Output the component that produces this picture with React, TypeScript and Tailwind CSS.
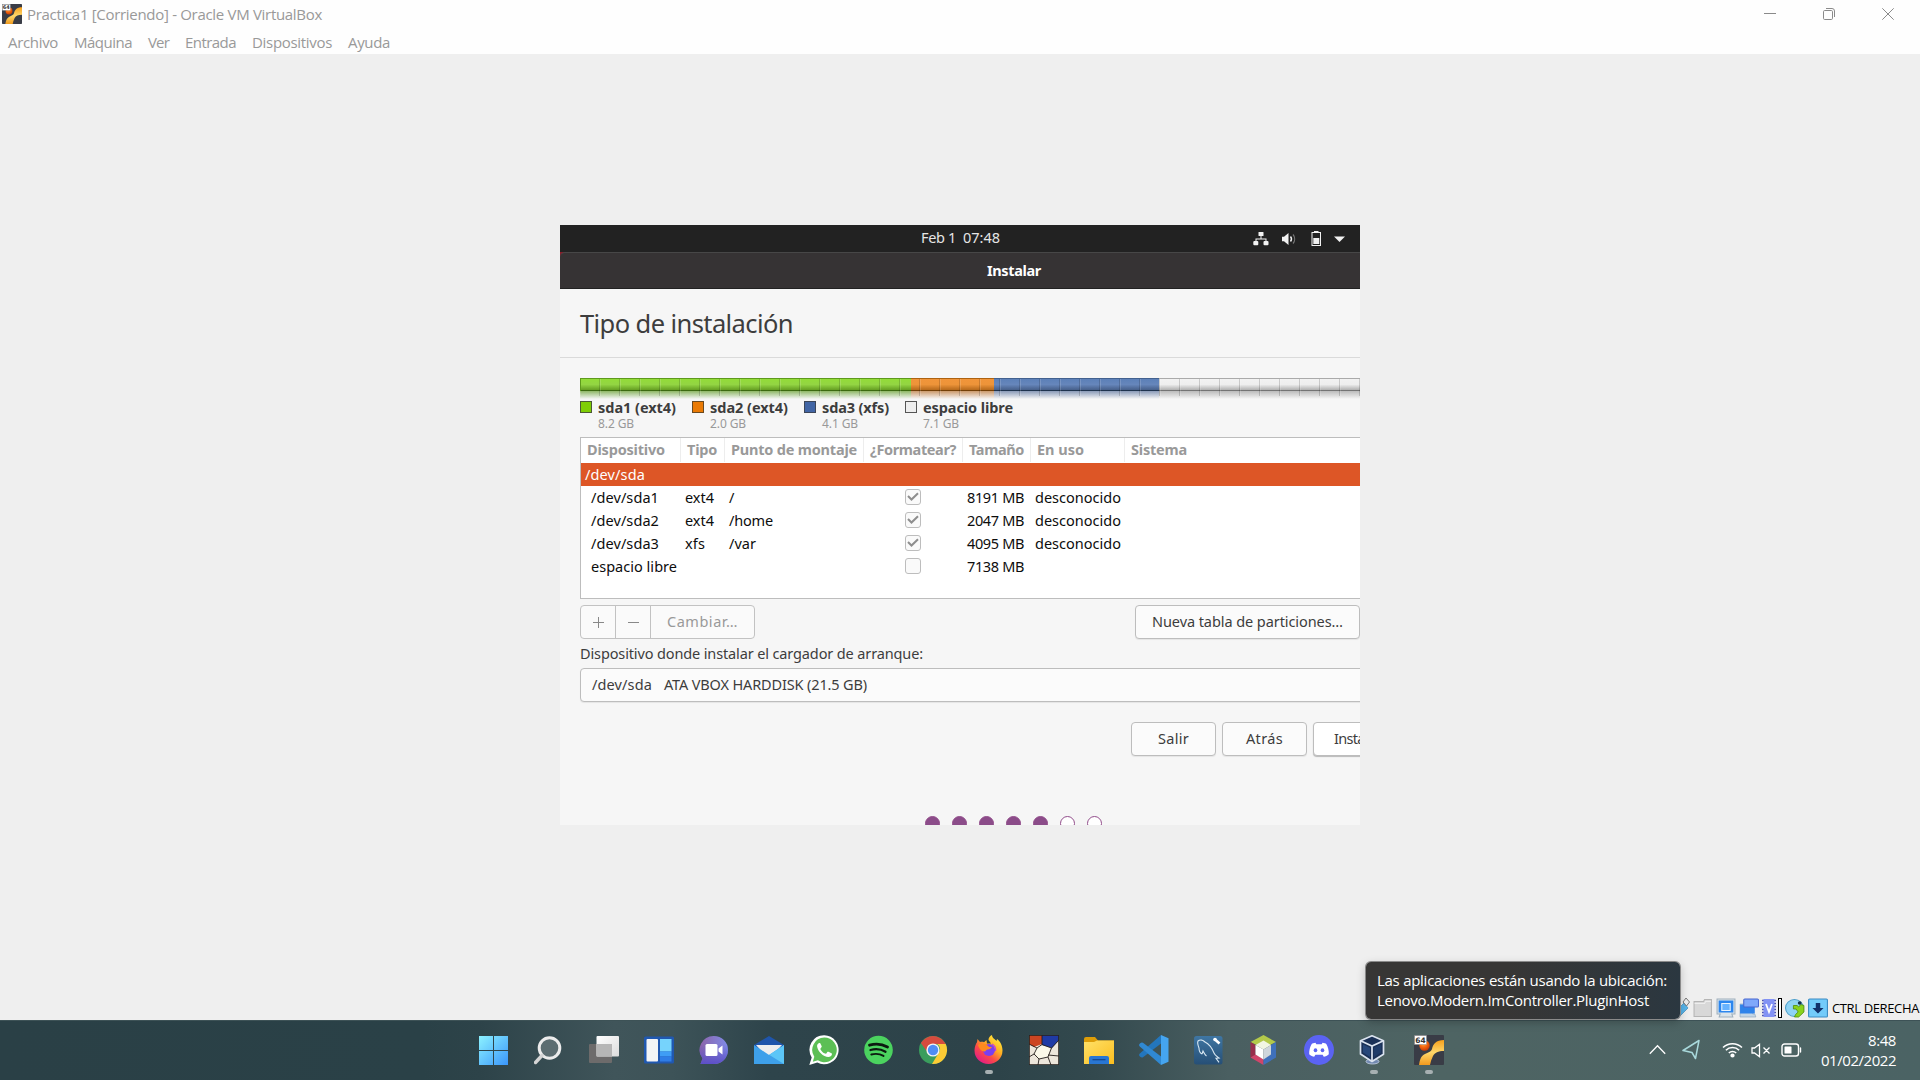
import React, { useLayoutEffect, useRef, type ReactNode } from "react";

/** Single line of text whose tracking is adjusted so it spans `w` pixels. */
function Fit({ w, className = "", children }: { w: number; className?: string; children: string }) {
  const ref = useRef<HTMLSpanElement>(null);
  useLayoutEffect(() => {
    const el = ref.current;
    if (!el) return;
    el.style.letterSpacing = "0px";
    const natural = el.getBoundingClientRect().width;
    el.style.letterSpacing = `${(w - natural) / Math.max(1, children.length)}px`;
  }, [w, children]);
  return (
    <span ref={ref} className={`inline-block shrink-0 whitespace-pre ${className}`}>
      {children}
    </span>
  );
}

function VmLogo({ size }: { size: number }) {
  return (
    <svg width={size} height={size} viewBox="0 0 30 30" className="shrink-0">
      <defs>
        <linearGradient id="vmY" x1="0" y1="0" x2="0" y2="1">
          <stop offset="0" stopColor="#f6a01c" />
          <stop offset=".5" stopColor="#ffd76a" />
          <stop offset="1" stopColor="#f09a1e" />
        </linearGradient>
        <radialGradient id="vmR" cx=".4" cy=".3" r=".7">
          <stop offset="0" stopColor="#ffae4a" />
          <stop offset=".5" stopColor="#f76a10" />
          <stop offset="1" stopColor="#c63c05" />
        </radialGradient>
      </defs>
      <rect width="30" height="30" rx="1" fill="#393c46" />
      <circle cx="10.5" cy="10.5" r="5.2" fill="url(#vmR)" />
      <path d="M30 5v11c-6 0-9 1.500-11 5-1.500 3-2.500 6-3 9H5c1-6 2-9 6-11 3-1.600 6-2 7-5 1-5 4-9 12-9z" fill="url(#vmY)" />
      <rect x=".5" y=".5" width="12" height="9" fill="#fff" stroke="#888" strokeWidth=".5" />
      <text x="6.500" y="7.800" textAnchor="middle" fontSize="7.500" fontWeight="700" fontFamily="DejaVu Sans" fill="#333">64</text>
    </svg>
  );
}

const menus: [string, number, number][] = [
  ["Archivo", 50, 16],
  ["Máquina", 58, 16],
  ["Ver", 21, 16],
  ["Entrada", 51, 16],
  ["Dispositivos", 80, 16],
  ["Ayuda", 42, 0],
];

function HostHeader() {
  return (
    <header className="h-[54px] shrink-0 bg-[#fefefe] font-['Open_Sans','Noto_Sans',sans-serif] text-[#999]">
      <div className="flex h-7 items-start">
        <div className="flex pt-1 pl-0.5">
          <VmLogo size={20} />
        </div>
        <Fit w={295} className="ml-[5px] text-[15px] leading-7">Practica1 [Corriendo] - Oracle VM VirtualBox</Fit>
        <div className="mr-[26px] ml-auto flex gap-[47px] pt-2">
          <svg width="12" height="12" stroke="#8a8a8a"><path d="M0 5.500h12" /></svg>
          <svg width="12" height="12" fill="none" stroke="#8a8a8a">
            <rect x=".5" y="2.500" width="9" height="9" rx="1.200" />
            <path d="M3 .5h6a2.500 2.500 0 0 1 2.500 2.500v6" />
          </svg>
          <svg width="12" height="12" stroke="#8a8a8a"><path d="M.3.3l11.400 11.400M11.700.3.3 11.700" /></svg>
        </div>
      </div>
      <nav className="flex pl-2">
        {menus.map(([label, w, gap]) => (
          <span key={label} className="flex" style={{ marginRight: gap }}>
            <Fit w={w} className="text-[15px] leading-7">{label}</Fit>
          </span>
        ))}
      </nav>
    </header>
  );
}

function GuestTopBar() {
  return (
    <div className="flex h-[27px] shrink-0 items-center bg-[#222] text-[14.5px] leading-[25px] text-[#e6e6e6]">
      <Fit w={35} className="-mt-[2px] ml-[361px]">Feb 1</Fit>
      <Fit w={37} className="-mt-[2px] ml-[7px]">07:48</Fit>
      <svg className="ml-[253px]" width="16" height="14" viewBox="0 0 16 14" fill="#f2f2f2">
        <rect x="5.500" y="0" width="5" height="4" rx=".6" />
        <path d="M7.500 4h1v2.500h5V9h-1V7.500h-9V9h-1V6.500h5z" />
        <rect x=".3" y="9" width="5" height="4.300" rx="1" />
        <rect x="10.500" y="9" width="5" height="4.300" rx="1" />
      </svg>
      <svg className="ml-[12px]" width="18" height="14" viewBox="0 0 18 14" fill="none">
        <path d="M1 4.800h2L7.500 1v12L3 9.300H1z" fill="#f2f2f2" />
        <path d="M9.500 4.500a4 4 0 0 1 0 5" stroke="#f2f2f2" strokeWidth="1.400" />
        <path d="M12 2.500a7 7 0 0 1 0 9" stroke="#777" strokeWidth="1.200" />
      </svg>
      <svg className="-mt-px ml-[12px]" width="11" height="15" viewBox="0 0 11 15">
        <path d="M3 0h4.500v1H10v14H.500V1H3z" fill="#f2f2f2" />
        <path d="M1.500 2h7.500v12H1.500z" fill="#222" />
        <path d="M2.300 7h6v6h-6z" fill="#f2f2f2" />
      </svg>
      <svg className="ml-[12px]" width="11" height="6" viewBox="0 0 11 6"><path d="M0 .5h11L5.500 6z" fill="#f2f2f2" /></svg>
    </div>
  );
}

const bar = [
  { w: "w-[331px]", body: "from-[#93dc38] via-[#93d543] to-[#659e22]", edge: "border-t-[#5e9a1c] border-b-[#3c6a10]", glow: "from-[#8fb765]" },
  { w: "w-[83px]", body: "from-[#f0953a] via-[#ed9439] to-[#b5691b]", edge: "border-t-[#ae6210] border-b-[#744008]", glow: "from-[#cb9a6c]" },
  { w: "w-[165px]", body: "from-[#5c80b8] via-[#6686bb] to-[#465f89]", edge: "border-t-[#42618f] border-b-[#20344f]", glow: "from-[#8b9bb8]" },
  { w: "w-[201px]", body: "from-[#f2f2f2] via-[#eee] to-[#b0b0b0]", edge: "border-t-[#aaa] border-b-[#747474]", glow: "from-[#bcbcbc]" },
];

function PartitionBar() {
  return (
    <div className="relative flex h-[22px] w-[780px] overflow-hidden">
      {bar.map((b) => (
        <div key={b.w} className={`shrink-0 ${b.w}`}>
          <div className={`h-[13px] border-t border-b bg-linear-to-b ${b.body} ${b.edge}`} />
          <div className={`h-[8px] bg-linear-to-b ${b.glow} to-[#f6f6f6]`} />
        </div>
      ))}
      <div className="absolute inset-x-0 top-px h-[17px] bg-[repeating-linear-gradient(to_right,rgba(255,255,255,0.15)_0_1px,transparent_1px_19px,rgba(0,0,0,0.16)_19px_20px)]" />
      <div className="absolute top-0 left-0 h-[13px] w-px bg-[#5e9a1c]" />
    </div>
  );
}

const legend: [string, number, string, string, string][] = [
  ["sda1 (ext4)", 78, "8.2 GB", "bg-[#7fce05] border-[#4b5a35]", "w-[112px]"],
  ["sda2 (ext4)", 78, "2.0 GB", "bg-[#ea7a04] border-[#6b4a20]", "w-[112px]"],
  ["sda3 (xfs)", 67, "4.1 GB", "bg-[#4165a5] border-[#3c4658]", "w-[101px]"],
  ["espacio libre", 90, "7.1 GB", "bg-[#eee] border-[#555]", "w-[120px]"],
];

function Legend() {
  return (
    <div className="flex h-[37px]">
      {legend.map(([name, w, size, color, box]) => (
        <div key={name} className={`flex shrink-0 ${box}`}>
          <div className={`mt-px size-3 shrink-0 border ${color}`} />
          <div className="ml-[6px] flex flex-col items-start">
            <Fit w={w} className="text-[14.5px] leading-[15px] font-bold text-[#3d3d3d]">{name}</Fit>
            <Fit w={36} className="text-[12px] leading-[17px] text-[#999]">{size}</Fit>
          </div>
        </div>
      ))}
    </div>
  );
}

const cols = "grid grid-cols-[100px_44px_139px_99px_68px_94px_1fr]";
const heads: [string, number][] = [
  ["Dispositivo", 78],
  ["Tipo", 30],
  ["Punto de montaje", 126],
  ["¿Formatear?", 86],
  ["Tamaño", 55],
  ["En uso", 47],
  ["Sistema", 56],
];
type Row = { dev: string; dw: number; type: string; tw: number; mount: string; mw: number; on: boolean; size: string; use: string };
const rows: Row[] = [
  { dev: "/dev/sda1", dw: 68, type: "ext4", tw: 29, mount: "/", mw: 6, on: true, size: "8191 MB", use: "desconocido" },
  { dev: "/dev/sda2", dw: 68, type: "ext4", tw: 29, mount: "/home", mw: 44, on: true, size: "2047 MB", use: "desconocido" },
  { dev: "/dev/sda3", dw: 68, type: "xfs", tw: 20, mount: "/var", mw: 27, on: true, size: "4095 MB", use: "desconocido" },
  { dev: "espacio libre", dw: 86, type: "", tw: 0, mount: "", mw: 0, on: false, size: "7138 MB", use: "" },
];

function PartitionTable() {
  return (
    <div className="h-[162px] w-[790px] shrink-0 border border-[#bdbdbd] bg-white text-[14.5px]">
      <div className={`${cols} h-[25px] text-[#999]`}>
        {heads.map(([h, w], i) => (
          <div key={h} className={`flex h-6 pl-[6px] ${i < 6 ? "border-r border-[#ededed]" : ""}`}>
            <Fit w={w} className="leading-[23px] font-bold">{h}</Fit>
          </div>
        ))}
      </div>
      <div className="flex h-[23px] bg-[#dd5626] pl-1 leading-[23px] text-white">
        <Fit w={60}>/dev/sda</Fit>
      </div>
      {rows.map((r) => (
        <div key={r.dev} className={`${cols} h-[23px] leading-[23px] text-[#0d0d0d]`}>
          <div className="pl-[10px]"><Fit w={r.dw}>{r.dev}</Fit></div>
          <div className="pl-1">{r.type && <Fit w={r.tw}>{r.type}</Fit>}</div>
          <div className="pl-1">{r.mount && <Fit w={r.mw}>{r.mount}</Fit>}</div>
          <div className="pt-[3px] pl-[41px]">
            <div className="flex size-4 items-center justify-center rounded-[3px] border border-[#bdbdbd] bg-[#fafafa]">
              {r.on && (
                <svg width="12" height="10" viewBox="0 0 12 10" fill="none" stroke="#8e8e8e" strokeWidth="2"><path d="M1 4l3.500 3.500L11 1.200" /></svg>
              )}
            </div>
          </div>
          <div className="pl-1"><Fit w={57}>{r.size}</Fit></div>
          <div className="pl-1">{r.use && <Fit w={86}>{r.use}</Fit>}</div>
          <div />
        </div>
      ))}
    </div>
  );
}

function Btn({ className, children }: { className: string; children: ReactNode }) {
  return (
    <div className={`flex h-[34px] shrink-0 items-start rounded-[4px] border border-[#bdbdbd] bg-[#fbfbfb] leading-[31px] shadow-[0_1px_1px_rgba(0,0,0,0.07)] ${className}`}>
      {children}
    </div>
  );
}

function Guest() {
  return (
    <section className="flex h-[600px] w-[800px] flex-col overflow-hidden bg-[#f6f6f6] font-['Noto_Sans','Open_Sans',sans-serif] text-[14.5px] text-[#3d3d3d]">
      <GuestTopBar />
      <div className="bg-[#8a1c2a]">
        <div className="flex h-[37px] shrink-0 rounded-tl-[5px] border-t border-b border-t-[#474747] border-b-[#222] bg-[#363334] pl-[427px] text-white">
          <Fit w={54} className="leading-[34px] font-bold">Instalar</Fit>
        </div>
      </div>
      <div className="flex h-[69px] shrink-0 border-b border-[#dadada] pl-[20px]">
        <Fit w={213} className="text-[25.5px] leading-[69px]">Tipo de instalación</Fit>
      </div>
      <div className="flex flex-col pt-5 pl-[20px]">
        <PartitionBar />
        <Legend />
        <PartitionTable />
        <div className="mt-[6px] flex">
          <div className="flex h-[34px] w-[175px] rounded-[4px] border border-[#c2c2c2] bg-[#fafafa] leading-[31px] text-[#999]">
            <div className="flex w-[35px] items-center justify-center border-r border-[#c2c2c2]">
              <svg width="11" height="11" stroke="#888"><path d="M0 5.500h11M5.500 0v11" /></svg>
            </div>
            <div className="flex w-[35px] items-center justify-center border-r border-[#c2c2c2]">
              <svg width="11" height="11" stroke="#888"><path d="M0 5.500h11" /></svg>
            </div>
            <Fit w={71} className="ml-4">Cambiar…</Fit>
          </div>
          <Btn className="ml-[380px] w-[225px] pl-4"><Fit w={191}>Nueva tabla de particiones…</Fit></Btn>
        </div>
        <div className="flex h-[29px]">
          <Fit w={343} className="leading-[29px]">Dispositivo donde instalar el cargador de arranque:</Fit>
        </div>
        <Btn className="w-[820px] pl-[11px]">
          <Fit w={60}>/dev/sda</Fit>
          <Fit w={203} className="ml-[12px]">ATA VBOX HARDDISK (21.5 GB)</Fit>
        </Btn>
        <div className="mt-5 ml-[551px] flex gap-[6px]">
          <Btn className="w-[85px] justify-center"><Fit w={31}>Salir</Fit></Btn>
          <Btn className="w-[85px] justify-center"><Fit w={37}>Atrás</Fit></Btn>
          <Btn className="w-[135px] bg-white pl-5 shadow-[0_1px_1px_rgba(0,0,0,0.25)]"><Fit w={86}>Instalar ahora</Fit></Btn>
        </div>
        <div className="mt-[60px] ml-[345px] flex gap-3">
          {[1, 1, 1, 1, 1, 0, 0].map((on, i) => (
            <div key={i} className={`size-[15px] rounded-full border border-[#924d8b] ${on ? "bg-[#8b4c89]" : "bg-white"}`} />
          ))}
        </div>
      </div>
    </section>
  );
}

function StatusStrip() {
  return (
    <div className="flex h-[22px] w-[240px] items-start self-end font-['Open_Sans','Noto_Sans',sans-serif] text-[13px] text-black">
      <svg width="10" height="20" viewBox="0 0 10 20" className="shrink-0">
        <path d="M0 9l4-4 4 5-8 8z" fill="#56b4ea" stroke="#2b7fb5" strokeWidth=".6" />
        <path d="M3 4l3-4 3.500 4L6.500 8z" fill="#eee" stroke="#777" />
      </svg>
      <svg width="20" height="20" viewBox="0 0 19 20" preserveAspectRatio="none" className="ml-[3px] shrink-0">
        <path d="M1 3.500h9l1-2h6.500V18.500H1z" fill="#d8d8d8" stroke="#b5b5b5" />
        <path d="M1.500 5.500h9.500l1-2h5" stroke="#eee" fill="none" />
      </svg>
      <svg width="20" height="20" viewBox="0 0 19 20" preserveAspectRatio="none" className="ml-[3px] shrink-0">
        <path d="M1 1h17v15h-3l1 3H3l1-3H1z" fill="#dbe4ea" stroke="#9fb0bd" />
        <rect x="2.500" y="2.500" width="14" height="12" fill="#2c86ee" />
        <rect x="5.500" y="5.500" width="8" height="7" fill="#68b3ff" stroke="#e6f3ff" />
      </svg>
      <svg width="20" height="20" viewBox="0 0 19 20" preserveAspectRatio="none" className="ml-[3px] shrink-0">
        <path d="M1 6h12v10h2l1 3H1z" fill="#c4d6e6" stroke="#93a9bd" strokeWidth=".7" />
        <path d="M1 6.500h14v9H1z" fill="#2f83ea" />
        <rect x="4.500" y="1" width="14" height="8" rx="1" fill="#7fa8fa" stroke="#4866cf" />
      </svg>
      <svg width="14" height="20" viewBox="0 0 14 20" className="ml-[3px] shrink-0">
        <path d="M0 2.500h14M0 5.500h14M0 8.500h14M0 11.500h14M0 14.500h14M0 17.500h14" stroke="#4a50b0" strokeWidth="1.500" />
        <rect x="1.500" y="1" width="11" height="18" fill="#8292f4" />
        <path d="M4 6l3 8 3-8" stroke="#fff" strokeWidth="1.800" fill="none" />
      </svg>
      <div className="ml-[2px] h-5 w-1 shrink-0 border border-black bg-white" />
      <svg width="20" height="20" viewBox="0 0 19 20" preserveAspectRatio="none" className="ml-[3px] shrink-0">
        <circle cx="9" cy="10" r="8.500" fill="#8fd3f5" stroke="#4a9cc9" />
        <path d="M8 7.500h3.500L13 9l2-2.500 3 1V14l-5 5h-4l1-2.500 2.500-2.500-2-3H8z" fill="#8ad31d" stroke="#4e8c0c" strokeWidth=".8" />
        <circle cx="14" cy="5" r="1.800" fill="#14304a" />
      </svg>
      <svg width="20" height="20" viewBox="0 0 18 20" preserveAspectRatio="none" className="ml-[3px] shrink-0">
        <rect x=".5" y="1" width="17" height="18" rx="1" fill="#73cbfa" stroke="#3c8cc4" />
        <path d="M7 5h4v5h3l-5 5.500L4 10h3z" fill="#12306a" />
      </svg>
      <Fit w={87} className="ml-[4px] leading-[20px]">CTRL DERECHA</Fit>
    </div>
  );
}

const S = ({ children }: { children: ReactNode }) => (
  <svg width="30" height="30" viewBox="0 0 30 30" className="shrink-0">{children}</svg>
);

const icons: { id: string; run?: boolean; el: ReactNode }[] = [
  {
    id: "start",
    el: (
      <S>
        <defs><linearGradient id="st" x1="0" y1="0" x2="1" y2="1"><stop offset="0" stopColor="#8cf2ff" /><stop offset="1" stopColor="#3a96fb" /></linearGradient></defs>
        <path d="M0 1h14v14H0zM15 1h14v14H15zM0 16h14v14H0zM15 16h14v14H15z" fill="url(#st)" />
      </S>
    ),
  },
  {
    id: "search",
    el: (
      <S>
        <circle cx="15.500" cy="13" r="10.300" fill="#5c6d71" stroke="#ececec" strokeWidth="3" />
        <path d="M8 20.500L1.500 27.500" stroke="#d5d5d5" strokeWidth="3.400" strokeLinecap="round" />
      </S>
    ),
  },
  {
    id: "taskview",
    el: (
      <S>
        <defs><linearGradient id="tv" x1="0" y1="0" x2="1" y2="1"><stop offset="0" stopColor="#fff" /><stop offset="1" stopColor="#dcdcdc" /></linearGradient></defs>
        <rect y="9" width="23" height="19" rx="1" fill="#6d6b6b" />
        <rect x="7.500" y="1" width="22.500" height="20.500" rx="1" fill="url(#tv)" />
        <rect x="7.500" y="9" width="15.500" height="12.500" fill="#b6b6b6" />
      </S>
    ),
  },
  {
    id: "widgets",
    el: (
      <S>
        <rect y="1.500" width="30" height="27" rx="1.500" fill="#2058b0" />
        <rect x="2.500" y="4" width="11.500" height="22.500" rx="1" fill="#f3f4f6" />
        <rect x="16" y="4" width="11.500" height="12.500" fill="#76d3fc" />
        <rect x="16" y="16.500" width="11.500" height="5" fill="#3f9df5" />
        <rect x="16" y="21.500" width="11.500" height="5" fill="#2f7de6" />
      </S>
    ),
  },
  {
    id: "chat",
    el: (
      <S>
        <defs><linearGradient id="ch" x1="0" y1="0" x2="1" y2="0"><stop offset="0" stopColor="#8c63a8" /><stop offset="1" stopColor="#7f8be8" /></linearGradient><linearGradient id="ch2" x1="0" y1="0" x2="0" y2="1"><stop offset=".3" stopColor="#5b55c8" stopOpacity="0" /><stop offset="1" stopColor="#5c4fc9" /></linearGradient></defs>
        <path d="M15 1a14 14 0 1 1 0 28H1.500l2-5.500A14 14 0 0 1 15 1z" fill="url(#ch)" />
        <path d="M15 1a14 14 0 1 1 0 28H1.500l2-5.500A14 14 0 0 1 15 1z" fill="url(#ch2)" />
        <rect x="6.500" y="9" width="12" height="12" rx="1.500" fill="#fff" />
        <path d="M19.500 13.500l4-3v9l-4-3z" fill="#fff" />
      </S>
    ),
  },
  {
    id: "mail",
    el: (
      <S>
        <path d="M0 10L15 1l15 9v5H0z" fill="#1f55ab" />
        <path d="M2 10h26l-9 10h-8z" fill="#eee" />
        <path d="M0 10l15 10 15-10v19H0z" fill="#3ea0ea" />
        <path d="M30 10v19L13 18.500 15 20z" fill="#5cc6f7" />
      </S>
    ),
  },
  {
    id: "whatsapp",
    el: (
      <S>
        <path d="M15.300.3a14.500 14.500 0 1 1-7 27.300L.3 30l2.400-7.600A14.500 14.500 0 0 1 15.300.3z" fill="#fff" />
        <path d="M15.300 2.600a12.300 12.300 0 1 1-6.400 22.700l-5.100 1.400 1.500-5A12.300 12.300 0 0 1 15.300 2.600z" fill="#5cbf55" />
        <path d="M10.200 8c-1.300.3-2.300 1.800-2.100 3.600.7 4.900 6 10.300 11.300 10.500 1.800 0 3.200-1.100 3.500-2.500.1-.7.100-1-.4-1.300l-3-1.500c-.5-.2-.8-.1-1.200.3l-1 1.300c-.3.400-.7.400-1.200.2-2-.9-3.500-2.300-4.600-4.200-.3-.4-.1-.8.200-1.100l.9-1.200c.2-.4.200-.6 0-1l-1.200-2.600c-.3-.6-.7-.600-1.200-.5z" fill="#fff" />
      </S>
    ),
  },
  {
    id: "spotify",
    el: (
      <S>
        <circle cx="14.500" cy="15" r="14.300" fill="#4bd35f" />
        <path d="M5.500 10.200c6.500-1.800 12.500-1.200 18 1.800" stroke="#0c1a10" strokeWidth="2.800" strokeLinecap="round" fill="none" />
        <path d="M6.500 15c5.500-1.500 10.500-.9 15 1.700" stroke="#0c1a10" strokeWidth="2.300" strokeLinecap="round" fill="none" />
        <path d="M7.300 19.500c4.500-1.200 8.600-.7 12.200 1.400" stroke="#0c1a10" strokeWidth="1.900" strokeLinecap="round" fill="none" />
      </S>
    ),
  },
  {
    id: "chrome",
    el: (
      <S>
        <circle cx="14" cy="15" r="14" fill="#3a9d5d" />
        <path d="M1.900 8A14 14 0 0 1 26.100 8L26.700 9H14a6 6 0 0 0-5.500 8.300z" fill="#d64b3e" />
        <path d="M26.700 9A14 14 0 0 1 13 29l6.300-10.500A6 6 0 0 0 18 9z" fill="#fccb35" />
        <circle cx="14" cy="15" r="6.600" fill="#f4f4f4" />
        <circle cx="14" cy="15" r="5.200" fill="#4f8df5" />
      </S>
    ),
  },
  {
    id: "firefox",
    run: true,
    el: (
      <S>
        <defs><linearGradient id="ff" x1=".85" y1=".1" x2=".2" y2=".95"><stop offset="0" stopColor="#ffe83a" /><stop offset=".35" stopColor="#ffae22" /><stop offset=".65" stopColor="#fb4a48" /><stop offset="1" stopColor="#e31a87" /></linearGradient></defs>
        <path d="M14.500 29C7 29 .5 23.500.5 15.500c0-4 1.500-7 2.500-8.300L3.500 4 6 7c1.500-.4 3-.3 4 .2L12.500 5l.5 3.500h4L14.500 5c0-2.500 1.500-4 3.500-5 0 3 3 4 4.500 6l.5-2c3.500 2.500 5.500 7 5.500 11.500C28.500 23.500 22 29 14.500 29z" fill="url(#ff)" />
        <circle cx="15" cy="15" r="6" fill="#7a3ff0" />
        <path d="M4 10c3-2.500 8-1.500 10 1 1 1.300 3 1 4 .7-.5 1.600-2 2.300-4.500 2.800-1.700.5-1.500 1.800-3 2C7 16.500 5 13 4 10z" fill="#ff8a1e" />
        <path d="M18 9c2.500 1.500 4 4 3.500 7" stroke="#c43fd8" strokeWidth="1.200" fill="none" />
      </S>
    ),
  },
  {
    id: "ball",
    el: (
      <S>
        <rect width="30" height="30" fill="#ece6db" />
        <path d="M0 0h13v9L5 12 0 9z" fill="#cc4522" />
        <path d="M13 0h17v5l-7 8-10-3z" fill="#1f3aa5" />
        <path d="M11 10l10 3-2 9-9 2-5-7z" fill="#fbf9ea" />
        <path d="M13 0v9.500L22.500 13 30 5M13 9.500L8 13 0 9M8 13l-3 6 5 5 9-2 3.500-9M5 19l-5 3M10 24l-1 6M19 22l3 8M19 20l11 1" stroke="#221d1b" strokeWidth=".9" fill="none" />
        <rect x=".4" y=".4" width="29.200" height="29.200" fill="none" stroke="#28221f" strokeWidth=".8" />
      </S>
    ),
  },
  {
    id: "explorer",
    el: (
      <S>
        <defs><linearGradient id="ex" x1="0" y1="0" x2="1" y2="1"><stop offset="0" stopColor="#ffe168" /><stop offset="1" stopColor="#fcbe1f" /></linearGradient></defs>
        <path d="M0 4q0-2 2-2h9l3 3.500h16V10H0z" fill="#dd9d08" />
        <path d="M0 7h10l3-1.500h17V29H0z" fill="url(#ex)" />
        <path d="M5 29v-6q0-2 2-2h16q2 0 2 2v6z" fill="#2976d2" />
        <path d="M8.500 24.700h13" stroke="#14458a" strokeWidth="1.200" />
      </S>
    ),
  },
  {
    id: "vscode",
    el: (
      <S>
        <path d="M22 0v8.500L4 22.300Q2.500 23 1.200 21.800L.5 21q-1-1.300.3-2.500z" fill="#2376bd" />
        <path d="M22 30v-8.500L4 7.700Q2.500 7 1.200 8.200L.5 9q-1 1.300.3 2.500z" fill="#3089d3" />
        <path d="M22 0l7.500 3.200v23.600L22 30z" fill="#45a5f0" />
      </S>
    ),
  },
  {
    id: "mysql",
    el: (
      <S>
        <defs><linearGradient id="my" x1="0" y1="0" x2="0" y2="1"><stop offset="0" stopColor="#3f76a3" /><stop offset="1" stopColor="#264f76" /></linearGradient></defs>
        <rect y="1" width="28.500" height="28.500" rx="2.500" fill="url(#my)" />
        <path d="M8 19c-2-1-3-4-3-6-.7-2-2-5-1-7 2-1.700 5-1 7 1 4 2 7 6 9 11 1 2.500 3 3.500 5 5l-3 .3 3 4M8 19l1-3c1 2 2 4 3.500 5" stroke="#d9e8f2" strokeWidth="1.100" fill="none" />
        <path d="M21 4.500l4.500 4" stroke="#fff" strokeWidth="2.600" />
        <circle cx="21" cy="4.500" r="1.800" fill="#fff" />
      </S>
    ),
  },
  {
    id: "netbeans",
    el: (
      <S>
        <g transform="translate(-.5 0)">
          <path d="M15 0l12.500 7L15 13.500 2 7z" fill="#b3c94a" />
          <path d="M2 7l5 3v10l-5 2.500z" fill="#982f4c" />
          <path d="M2 22.500l5-3 8 4V30z" fill="#d0456a" />
          <path d="M27.500 7v15.500L15 30v-6.500l7.500-4V10z" fill="#3f70bb" />
          <path d="M7 10l8-4.500 7.500 4.500L15 14.500z" fill="#f1f5e2" />
          <path d="M7 10l8 4.500v10l-8-5z" fill="#fff" />
          <path d="M22.500 10L15 14.500v10l7.500-5z" fill="#cfd6dc" />
        </g>
      </S>
    ),
  },
  {
    id: "discord",
    el: (
      <S>
        <circle cx="15" cy="15" r="15" fill="#5b63f3" />
        <path d="M11.500 7.800C9.800 8 8.300 8.600 7.700 9 6 11.500 5 15.500 5.200 19.300c1.500 1.400 3.500 2.200 5 2.500l1.200-2h7.200l1.200 2c1.500-.3 3.500-1.100 5-2.500.2-3.800-.8-7.800-2.500-10.300-.6-.4-2.100-1-3.800-1.200l-.8 1.400h-5.400z" fill="#fff" />
        <ellipse cx="11.500" cy="15.200" rx="1.800" ry="2" fill="#5b63f3" />
        <ellipse cx="18.500" cy="15.200" rx="1.800" ry="2" fill="#5b63f3" />
      </S>
    ),
  },
  {
    id: "vbox",
    run: true,
    el: (
      <S>
        <ellipse cx="13.500" cy="26.500" rx="6.500" ry="2.500" fill="#7188b0" stroke="#c7d2e4" strokeWidth=".8" />
        <path d="M13 .8l11.500 5v13.500L13 26.500 1.500 19V5.800z" fill="#1b3157" stroke="#dbe3ef" strokeWidth="1.700" strokeLinejoin="round" />
        <path d="M1.500 5.800L13 11l11.500-5.200M13 11v15" stroke="#dbe3ef" strokeWidth="1.700" fill="none" />
        <path d="M4 9.500l7 3.200V22l-7-4.500z" fill="#27477a" />
        <path d="M22 9.500l-7 3.200V22l7-4.500z" fill="#203c69" />
      </S>
    ),
  },
  { id: "vm", run: true, el: <VmLogo size={30} /> },
];

function Taskbar() {
  return (
    <footer className="flex h-[60px] shrink-0 border-t border-[#3d5256] bg-[linear-gradient(to_right,#2a4046_0%,#2a4147_22%,#2d4349_25%,#40555a_32%,#3d5358_35%,#2e444b_40%,#2d4349_52%,#33494e_57%,#4a5f61_64%,#4e6463_75%,#4b6364_100%)] font-['Open_Sans','Noto_Sans',sans-serif] text-[15px] text-white">
      <div className="flex gap-[25px] pt-[14px] pl-[479px]">
        {icons.map((ic) => (
          <div key={ic.id} className="flex w-[30px] flex-col items-center">
            {ic.el}
            {ic.run && <div className="mt-[5px] h-1 w-2 rounded-full bg-[#a7b0b2]" />}
          </div>
        ))}
      </div>
      <div className="ml-auto flex items-start">
        <svg className="mt-[23px]" width="17" height="11" viewBox="0 0 17 11" fill="none" stroke="#fff" strokeWidth="1.300"><path d="M.8 9.800l7.700-8 7.700 8" /></svg>
        <svg className="mt-[18px] ml-[16px]" width="19" height="22" viewBox="0 0 19 22" fill="none" stroke="#a9d9dc" strokeWidth="1.500" strokeLinejoin="round"><path d="M17 1.500L1 11.500l9 2 3.500 6z" /></svg>
        <svg className="mt-[20px] ml-[21px]" width="21" height="17" viewBox="0 0 20 17" preserveAspectRatio="none" fill="none" stroke="#fff" strokeWidth="1.500">
          <path d="M1 6.500a12.500 12.500 0 0 1 18 0M3.700 9.300a8.700 8.700 0 0 1 12.600 0M6.500 12a4.900 4.900 0 0 1 7 0" />
          <circle cx="10" cy="14.500" r="1.300" fill="#fff" />
        </svg>
        <svg className="mt-[22px] ml-[8px]" width="20" height="15" viewBox="0 0 20 15" fill="none" stroke="#fff" strokeWidth="1.300">
          <path d="M1 5h2.500L8.500 1.300v12.400L3.500 10H1zM12.500 4.500l6 6M18.500 4.500l-6 6" />
        </svg>
        <svg className="mt-[22px] ml-[10px]" width="21" height="14" viewBox="0 0 21 14" fill="none" stroke="#fff" strokeWidth="1.400">
          <rect x="1" y="1" width="16.500" height="12" rx="2.500" />
          <rect x="3.500" y="3.500" width="7" height="7" rx=".6" fill="#fff" stroke="none" />
          <path d="M19.500 5v4" strokeLinecap="round" />
        </svg>
        <div className="mt-[9px] mr-[24px] ml-[19px] flex w-[75px] flex-col items-end leading-5">
          <Fit w={28}>8:48</Fit>
          <Fit w={75}>01/02/2022</Fit>
        </div>
      </div>
    </footer>
  );
}

export default function App() {
  return (
    <div className="relative flex h-[1080px] w-[1920px] flex-col overflow-hidden bg-[#efefef]">
      <HostHeader />
      <main className="flex flex-1 flex-col items-center justify-between pt-[171px]">
        <Guest />
        <StatusStrip />
      </main>
      <Taskbar />
      <div className="absolute top-[962px] left-[1366px] flex h-[57px] w-[314px] flex-col items-start rounded-[5px] bg-linear-to-r from-[#373635] from-45% to-[#2b3740] pt-[8px] pl-[11px] font-['Open_Sans','Noto_Sans',sans-serif] text-[15px] leading-5 text-white shadow-[0_0_0_1px_#8a8a8a,0_3px_10px_rgba(0,0,0,0.25)]">
        <Fit w={290}>Las aplicaciones están usando la ubicación:</Fit>
        <Fit w={272}>Lenovo.Modern.ImController.PluginHost</Fit>
      </div>
    </div>
  );
}
